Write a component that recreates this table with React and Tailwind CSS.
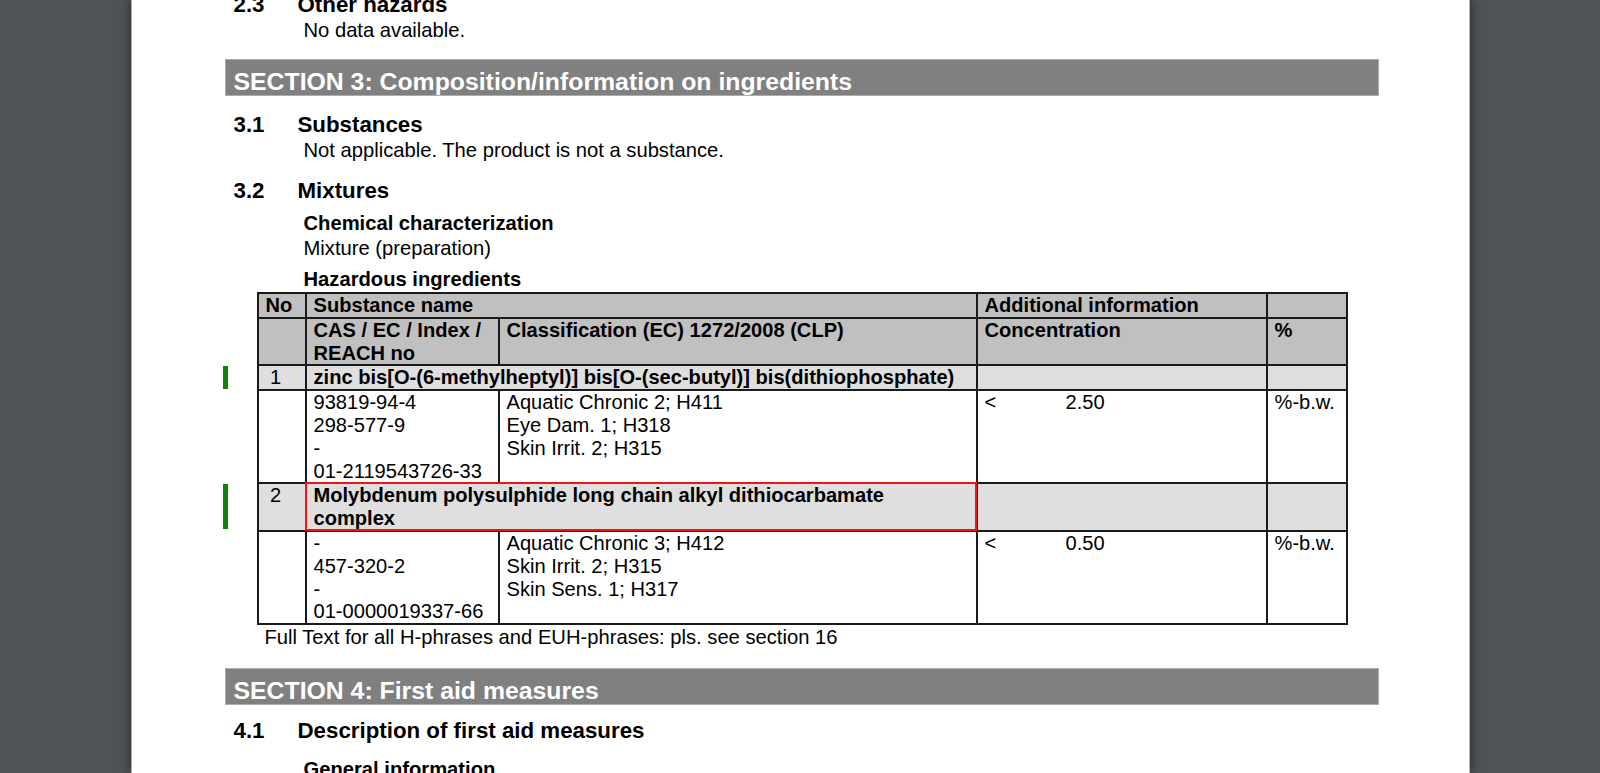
import React from 'react';

const cell = 'border-2 border-[#1a1a1a] p-0 pl-[7px] align-top';

const Heading = ({ num, title, className = '' }) => (
  <div className={`flex pl-[9px] text-[22.3px] leading-[26px] font-bold text-black ${className}`}>
    <span className="w-[64px]">{num}</span>
    <span>{title}</span>
  </div>
);

const SectionBar = ({ children, className = '' }) => (
  <div className={`h-[37px] bg-[#808080] border border-[#acacac] pl-[8px] pt-[8px] text-[24.8px] leading-[28px] font-bold text-white ${className}`}>
    {children}
  </div>
);

const Marker = ({ h }) => (
  <span className={`absolute left-[-36px] top-0 w-[5px] bg-[#12820f] ${h}`} />
);

const ingredients = [
  {
    no: 1,
    name: 'zinc bis[O-(6-methylheptyl)] bis[O-(sec-butyl)] bis(dithiophosphate)',
    ids: ['93819-94-4', '298-577-9', '-', '01-2119543726-33'],
    clp: ['Aquatic Chronic 2; H411', 'Eye Dam. 1; H318', 'Skin Irrit. 2; H315'],
    conc: '2.50',
  },
  {
    no: 2,
    name: (
      <>
        Molybdenum polysulphide long chain alkyl dithiocarbamate
        <br />
        complex
      </>
    ),
    ids: ['-', '457-320-2', '-', '01-0000019337-66'],
    clp: ['Aquatic Chronic 3; H412', 'Skin Irrit. 2; H315', 'Skin Sens. 1; H317'],
    conc: '0.50',
    flagged: true,
  },
];

export default function App() {
  return (
    <div className="h-[773px] overflow-hidden bg-[#4f5356] font-['Liberation_Sans',Arial,sans-serif]">
      <div className="mx-auto w-[1339px] h-[773px] bg-white border-x border-[#b5b5b5] shadow-[0_0_10px_rgba(0,0,0,0.55)] overflow-hidden">
        <div className="ml-[93px] w-[1154px] text-black">
          <Heading num="2.3" title="Other hazards" className="-mt-[8px]" />
          <p className="pl-[79px] text-[20.2px] leading-[24px]">No data available.</p>

          <SectionBar className="mt-[17px]">SECTION 3: Composition/information on ingredients</SectionBar>

          <Heading num="3.1" title="Substances" className="mt-[16px]" />
          <p className="pl-[79px] text-[20.2px] leading-[24px]">Not applicable. The product is not a substance.</p>

          <Heading num="3.2" title="Mixtures" className="mt-[16px]" />
          <div className="pl-[79px] mt-[7px] text-[20.2px] leading-[24px] font-bold">Chemical characterization</div>
          <p className="pl-[79px] mt-[1px] text-[20.2px] leading-[24px]">Mixture (preparation)</p>
          <div className="pl-[79px] mt-[7px] text-[20.2px] leading-[24px] font-bold">Hazardous ingredients</div>

          <table className="mt-[1px] ml-[32px] w-[1089px] table-fixed border-collapse text-left text-[20.1px] leading-[22.8px]">
            <colgroup>
              <col className="w-[48px]" />
              <col className="w-[193px]" />
              <col className="w-[478px]" />
              <col className="w-[290px]" />
              <col className="w-[80px]" />
            </colgroup>
            <thead className="bg-[#c0c0c0] font-bold">
              <tr>
                <th className={`${cell} text-left`}>No</th>
                <th className={`${cell} text-left`} colSpan={2}>Substance name</th>
                <th className={`${cell} text-left`}>Additional information</th>
                <th className={cell}></th>
              </tr>
              <tr>
                <th className={cell}></th>
                <th className={`${cell} text-left`}>CAS / EC / Index /<br />REACH no</th>
                <th className={`${cell} text-left`}>Classification (EC) 1272/2008 (CLP)</th>
                <th className={`${cell} text-left`}>Concentration</th>
                <th className={`${cell} text-left`}>%</th>
              </tr>
            </thead>
            <tbody>
              {ingredients.map((ing) => (
                <React.Fragment key={ing.no}>
                  <tr className="bg-[#dfdfdf]">
                    <td className={`${cell} relative text-center pr-[19px]`}>
                      <Marker h={ing.flagged ? 'h-[45px]' : 'h-[23px]'} />
                      {ing.no}
                    </td>
                    <td className={`${cell} relative font-bold whitespace-nowrap`} colSpan={2}>
                      {ing.flagged && (
                        <span className="absolute -left-[2px] -top-[2px] -right-[1px] -bottom-[1px] border-2 border-[#f01515]" />
                      )}
                      {ing.name}
                    </td>
                    <td className={cell}></td>
                    <td className={cell}></td>
                  </tr>
                  <tr>
                    <td className={cell}></td>
                    <td className={cell}>
                      {ing.ids.map((l, i) => (
                        <div key={i}>{l}</div>
                      ))}
                    </td>
                    <td className={cell}>
                      {ing.clp.map((l, i) => (
                        <div key={i}>{l}</div>
                      ))}
                    </td>
                    <td className={cell}>
                      <div className="flex">
                        <span className="w-[81px]">&lt;</span>
                        <span>{ing.conc}</span>
                      </div>
                    </td>
                    <td className={cell}>%-b.w.</td>
                  </tr>
                </React.Fragment>
              ))}
            </tbody>
          </table>
          <p className="ml-[40px] text-[20.2px] leading-[24px]">Full Text for all H-phrases and EUH-phrases: pls. see section 16</p>

          <SectionBar className="mt-[19px]">SECTION 4: First aid measures</SectionBar>

          <Heading num="4.1" title="Description of first aid measures" className="mt-[13px]" />
          <div className="pl-[79px] mt-[13px] text-[20.2px] leading-[24px] font-bold">General information</div>
        </div>
      </div>
    </div>
  );
}
